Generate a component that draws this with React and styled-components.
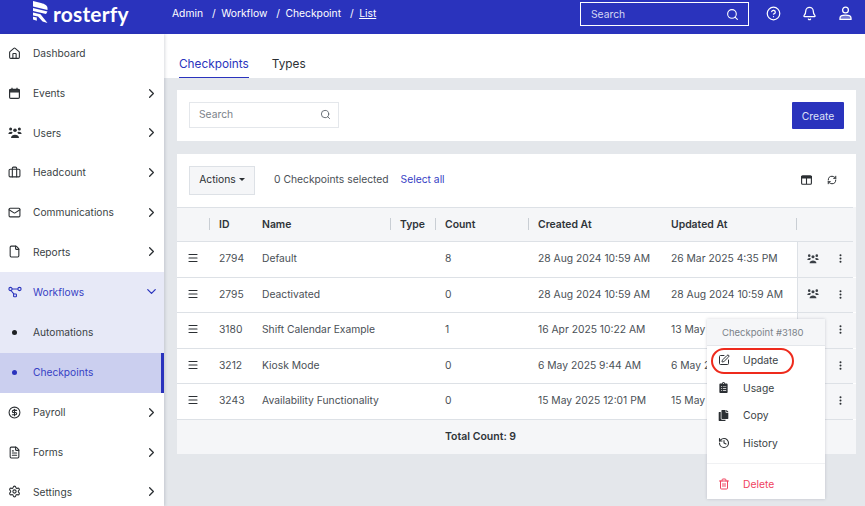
import styled, { createGlobalStyle } from "styled-components";
import {
  Home, Briefcase, Mail, File, CircleDollarSign, FileText, Settings, ChevronRight, ChevronDown,
  Search, CircleHelp, Bell, RefreshCw, Menu, EllipsisVertical, SquarePen, History, Trash2,
} from "lucide-react";
import { FaClipboardList, FaCopy } from "react-icons/fa";

const GlobalStyle = createGlobalStyle`
  html, body { margin: 0; padding: 0; height: 100%; overflow: hidden; }
  body { font-family: Inter, "Liberation Sans", sans-serif; color: #3a3f45; background: #e4e7eb; }
  * { box-sizing: border-box; }
`;

function GroupIcon({ size = 14, color = "currentColor" }) {
  return (
    <svg width={size} height={size} viewBox="0 0 14 13" fill={color}>
      <circle cx="2.6" cy="2.6" r="1.5" />
      <circle cx="11.4" cy="2.6" r="1.5" />
      <circle cx="7" cy="3.8" r="1.8" />
      <path d="M0.4 7.6 C0.4 5.2 4.2 4.6 4.6 6.2 L3.4 7.6 Z" />
      <path d="M13.6 7.6 C13.6 5.2 9.8 4.6 9.4 6.2 L10.6 7.6 Z" />
      <path d="M3 11.6 C3 7.2 11 7.2 11 11.6 Z" />
    </svg>
  );
}

function CalendarIcon() {
  return (
    <svg width="13" height="13" viewBox="0 0 13 13" fill="none" stroke="currentColor" strokeWidth="1.2">
      <rect x="1.6" y="2.4" width="9.8" height="9" rx="1.2" />
      <path d="M1.6 3.2 H11.4 V4.8 H1.6 Z" fill="currentColor" />
      <path d="M4 0.8 V2.6 M9 0.8 V2.6" />
    </svg>
  );
}

function WorkflowIcon() {
  return (
    <svg width="14" height="14" viewBox="0 0 14 14" fill="none" stroke="currentColor" strokeWidth="1.1">
      <circle cx="2.5" cy="4" r="1.6" />
      <circle cx="11.5" cy="4" r="1.6" />
      <rect x="5.6" y="9" width="2.8" height="2.8" rx="0.6" />
      <path d="M4 4 H10 M3 5.5 L6 9.2" />
    </svg>
  );
}

function PersonIcon() {
  return (
    <svg width="15" height="15" viewBox="0 0 15 15" fill="none" stroke="currentColor" strokeWidth="1.3">
      <circle cx="7.5" cy="4" r="2.9" />
      <path d="M2 13.4 V12 C2 10.2 4.4 9.2 7.5 9.2 C10.6 9.2 13 10.2 13 12 V13.4 Z" fill="rgba(255,255,255,0.35)" />
    </svg>
  );
}

function ColumnsIcon() {
  return (
    <svg width="11" height="10" viewBox="0 0 11 10" fill="none" stroke="#2b2f33" strokeWidth="1.1">
      <rect x="0.6" y="0.8" width="9.8" height="8.4" rx="1" />
      <path d="M0.6 1.6 H10.4 V3 H0.6 Z" fill="#2b2f33" />
      <path d="M5.5 2 V9" />
    </svg>
  );
}

const navItems = [
  { label: "Dashboard", icon: <Home size={13} /> },
  { label: "Events", icon: <CalendarIcon />, arrow: true },
  { label: "Users", icon: <GroupIcon size={14} />, arrow: true },
  { label: "Headcount", icon: <Briefcase size={13} />, arrow: true },
  { label: "Communications", icon: <Mail size={13} />, arrow: true },
  { label: "Reports", icon: <File size={13} />, arrow: true },
];

const navBottom = [
  { label: "Payroll", icon: <CircleDollarSign size={13} /> },
  { label: "Forms", icon: <FileText size={13} /> },
  { label: "Settings", icon: <Settings size={13} /> },
];

const rows = [
  { id: 2794, name: "Default", count: 8, created: "28 Aug 2024 10:59 AM", updated: "26 Mar 2025 4:35 PM", h: 36 },
  { id: 2795, name: "Deactivated", count: 0, created: "28 Aug 2024 10:59 AM", updated: "28 Aug 2024 10:59 AM", h: 35 },
  { id: 3180, name: "Shift Calendar Example", count: 1, created: "16 Apr 2025 10:22 AM", updated: "13 May 2025 9:15 AM", h: 36 },
  { id: 3212, name: "Kiosk Mode", count: 0, created: "6 May 2025 9:44 AM", updated: "6 May 2025 9:44 AM", h: 35 },
  { id: 3243, name: "Availability Functionality", count: 0, created: "15 May 2025 12:01 PM", updated: "15 May 2025 12:01 PM", h: 36 },
];

function Logo() {
  return (
    <LogoWrap>
      <svg width="15" height="23" viewBox="0 0 15 23" fill="#fff">
        <path d="M0 0 L8 2 C12 3 14.5 4.6 14.5 7.2 L14.5 9 L0 5.6 Z" />
        <path d="M0 7 L14.5 10.4 L13 13 L0 10 Z" />
        <path d="M0 11.4 L7.5 13.2 L14.5 22 L9.6 20.4 L5 15.4 L0 14.4 Z" />
        <path d="M0 15.8 L3.8 16.6 L3.8 19.8 L0 18.6 Z" />
      </svg>
      <LogoText>rosterfy</LogoText>
    </LogoWrap>
  );
}

export default function App() {
  return (
    <Page>
      <GlobalStyle />
      <TopBar>
        <Logo />
        <Crumbs>
          <span>Admin</span><Slash>/</Slash>
          <span>Workflow</span><Slash>/</Slash>
          <span>Checkpoint</span><Slash>/</Slash>
          <CrumbLink>List</CrumbLink>
        </Crumbs>
        <TopSearch>
          <span>Search</span>
          <Search size={13} color="#fff" />
        </TopSearch>
        <TopIcons>
          <CircleHelp size={15} />
          <Bell size={15} />
          <PersonIcon />
        </TopIcons>
      </TopBar>
      <Body>
        <Sidebar>
          {navItems.map((n) => (
            <NavRow key={n.label}>
              <NavIcon>{n.icon}</NavIcon>
              <NavLabel>{n.label}</NavLabel>
              {n.arrow && <ChevronRight size={15} color="#2b2f33" />}
            </NavRow>
          ))}
          <NavRow $open $blue>
            <NavIcon $blue><WorkflowIcon /></NavIcon>
            <NavLabel>Workflows</NavLabel>
            <ChevronDown size={15} color="#2a33bd" />
          </NavRow>
          <NavRow $open>
            <Dot />
            <NavLabel>Automations</NavLabel>
          </NavRow>
          <NavRow $open $active $blue>
            <Dot $blue />
            <NavLabel>Checkpoints</NavLabel>
          </NavRow>
          {navBottom.map((n) => (
            <NavRow key={n.label}>
              <NavIcon>{n.icon}</NavIcon>
              <NavLabel>{n.label}</NavLabel>
              <ChevronRight size={15} color="#2b2f33" />
            </NavRow>
          ))}
        </Sidebar>
        <Main>
          <Tabs>
            <Tab $active>Checkpoints</Tab>
            <Tab>Types</Tab>
          </Tabs>
          <Content>
            <SearchCard>
              <SearchBox>
                <span>Search</span>
                <Search size={11} color="#5f666d" />
              </SearchBox>
              <CreateButton>Create</CreateButton>
            </SearchCard>
            <TableCard>
              <Toolbar>
                <ActionsButton>Actions<Caret /></ActionsButton>
                <SelectedText>0 Checkpoints selected</SelectedText>
                <SelectAll>Select all</SelectAll>
                <ToolIcons>
                  <ColumnsIcon />
                  <RefreshCw size={10} color="#2b2f33" strokeWidth={2.4} />
                </ToolIcons>
              </Toolbar>
              <HeadRow>
                <HeadCell $sep="right" />
                <HeadCell>ID</HeadCell>
                <HeadCell>Name</HeadCell>
                <HeadCell $sep="left">Type</HeadCell>
                <HeadCell $sep="left">Count</HeadCell>
                <HeadCell $sep="left">Created At</HeadCell>
                <HeadCell>Updated At</HeadCell>
                <HeadCell $sep="left" />
              </HeadRow>
              {rows.map((r) => (
                <Row key={r.id} $h={r.h}>
                  <Cell><Menu size={12} color="#2b2f33" strokeWidth={2.2} /></Cell>
                  <Cell>{r.id}</Cell>
                  <Cell>{r.name}</Cell>
                  <Cell />
                  <Cell>{r.count}</Cell>
                  <Cell>{r.created}</Cell>
                  <Cell>{r.updated}</Cell>
                  <ActionCell>
                    <GroupIcon size={12} color="#3a3f45" />
                    <EllipsisVertical size={11} color="#2b2f33" strokeWidth={2.4} />
                  </ActionCell>
                </Row>
              ))}
              <FootRow>
                <FootText>Total Count: 9</FootText>
              </FootRow>
            </TableCard>
          </Content>
        </Main>
      </Body>
      <Popover>
        <PopHead>Checkpoint #3180</PopHead>
        <PopList>
          <PopItem><PopIcon><SquarePen size={12} /></PopIcon>Update<RedRing /></PopItem>
          <PopItem><PopIcon><FaClipboardList size={11} /></PopIcon>Usage</PopItem>
          <PopItem><PopIcon><FaCopy size={11} /></PopIcon>Copy</PopItem>
          <PopItem><PopIcon><History size={12} strokeWidth={2.2} /></PopIcon>History</PopItem>
        </PopList>
        <PopDelete><PopIcon><Trash2 size={12} /></PopIcon>Delete</PopDelete>
      </Popover>
    </Page>
  );
}

const Page = styled.div`
  position: relative;
  width: 865px;
  height: 506px;
  overflow: hidden;
  display: flex;
  flex-direction: column;
`;

const TopBar = styled.header`
  height: 34px;
  flex: none;
  background: #2a33bd;
  color: #fff;
  display: flex;
  align-items: center;
  padding-left: 33px;
`;

const LogoWrap = styled.div`
  display: flex;
  align-items: center;
  gap: 5px;
  width: 139px;
  margin-top: -9px;
`;

const LogoText = styled.span`
  font-family: Lato, sans-serif;
  font-weight: 700;
  font-size: 21px;
  margin-top: 2px;
  letter-spacing: 0.2px;
`;

const Crumbs = styled.nav`
  font-size: 10.3px;
  display: flex;
  width: 408px;
  margin-top: -8px;
`;

const Slash = styled.span`
  margin: 0 5.4px 0 9px;
`;

const CrumbLink = styled.span`
  text-decoration: underline;
`;

const TopSearch = styled.div`
  width: 169px;
  height: 24px;
  border: 1px solid #fff;
  display: flex;
  align-items: center;
  justify-content: space-between;
  padding: 0 9px 0 10px;
  font-size: 10.3px;
  color: #d5d8f4;
  margin-top: -6px;
`;

const TopIcons = styled.div`
  display: flex;
  gap: 21px;
  margin-left: 17px;
  margin-top: -8px;
`;

const Body = styled.div`
  flex: 1;
  display: flex;
  min-height: 0;
`;

const Sidebar = styled.aside`
  width: 164px;
  flex: none;
  background: #fff;
  box-shadow: 1px 0 3px rgba(40, 50, 70, 0.18);
  z-index: 1;
`;

const NavRow = styled.div`
  height: ${(p) => (p.$open ? "40.3px" : "39.7px")};
  display: flex;
  align-items: center;
  padding: 0 5px 1px 8px;
  font-size: 10.2px;
  color: ${(p) => (p.$blue ? "#3640c4" : "#3a3f45")};
  background: ${(p) => (p.$active ? "#cbcfef" : p.$open ? "#e7e9f7" : "#fff")};
  border-right: ${(p) => (p.$active ? "3px solid #2a33bd" : "none")};
`;

const NavIcon = styled.span`
  width: 25px;
  display: flex;
  color: ${(p) => (p.$blue ? "#2a33bd" : "#2b2f33")};
`;

const NavLabel = styled.span`
  flex: 1;
`;

const Dot = styled.span`
  width: 5px;
  height: 5px;
  border-radius: 50%;
  margin: 0 16px 0 4px;
  flex: none;
  background: ${(p) => (p.$blue ? "#2a33bd" : "#1e2124")};
`;

const Main = styled.main`
  flex: 1;
  min-width: 0;
  display: flex;
  flex-direction: column;
`;

const Tabs = styled.div`
  height: 44px;
  flex: none;
  background: #fff;
  display: flex;
  gap: 23px;
  padding-left: 15px;
`;

const Tab = styled.div`
  font-size: 11.8px;
  padding-top: 23px;
  color: ${(p) => (p.$active ? "#2a33bd" : "#2b2f33")};
  border-bottom: ${(p) => (p.$active ? "1px solid #2a33bd" : "none")};
`;

const Content = styled.div`
  flex: 1;
  padding: 12px 9px 0 13px;
  display: flex;
  flex-direction: column;
  gap: 13px;
`;

const SearchCard = styled.section`
  height: 51px;
  flex: none;
  background: #fff;
  display: flex;
  align-items: flex-start;
  justify-content: space-between;
  padding: 12px 12px 0;
`;

const SearchBox = styled.div`
  width: 150px;
  height: 26px;
  border: 1px solid #e4e7eb;
  display: flex;
  align-items: center;
  justify-content: space-between;
  padding: 0 7px 2px 9px;
  font-size: 10.3px;
  color: #7b8289;
`;

const CreateButton = styled.button`
  width: 52px;
  height: 27px;
  border: none;
  border-radius: 1px;
  background: #2a33bd;
  color: #dfe1f7;
  font: 400 10.3px Inter, sans-serif;
  padding: 0;
`;

const TableCard = styled.section`
  background: #fff;
  flex: none;
`;

const Toolbar = styled.div`
  height: 53px;
  display: flex;
  align-items: center;
  padding: 0 12px 1px;
  font-size: 10.3px;
`;

const ActionsButton = styled.button`
  width: 66px;
  height: 29px;
  background: #f5f6f8;
  border: 1px solid #dde1e6;
  font: 400 10.3px Inter, sans-serif;
  color: #2b2f33;
  padding: 0 0 2px;
  margin-right: 19px;
`;

const Caret = styled.i`
  display: inline-block;
  margin-left: 3px;
  vertical-align: 2px;
  border-top: 3px solid #2b2f33;
  border-left: 3px solid transparent;
  border-right: 3px solid transparent;
`;

const SelectedText = styled.span`
  color: #4a5056;
  margin: 0 12px 2px 0;
`;

const SelectAll = styled.span`
  color: #3640c4;
  margin-bottom: 2px;
`;

const ToolIcons = styled.div`
  margin-left: auto;
  display: flex;
  align-items: center;
  gap: 15px;
  padding-right: 7px;
`;

const columns = "33px 43px 138px 45px 93px 133px 135px 56px";

const HeadRow = styled.div`
  display: grid;
  grid-template-columns: ${columns};
  height: 34.5px;
  background: #f5f6f8;
  box-shadow: 3px 0 0 #f5f6f8;
  border-top: 1px solid #dde1e6;
  border-bottom: 1px solid #dde1e6;
  width: 676px;
`;

const HeadCell = styled.div`
  font-size: 10.4px;
  font-weight: 600;
  color: #2f3439;
  display: flex;
  align-items: center;
  padding-left: 9px;
  position: relative;
  &::before {
    content: "";
    display: ${(p) => (p.$sep ? "block" : "none")};
    position: absolute;
    ${(p) => (p.$sep === "right" ? "right: 0;" : "left: -1px;")}
    top: 10px;
    height: 12px;
    width: 1px;
    background: #c9ced4;
  }
`;

const Row = styled.div`
  display: grid;
  grid-template-columns: ${columns};
  height: ${(p) => p.$h}px;
  border-bottom: 1px solid #dde1e6;
  width: 676px;
`;

const Cell = styled.div`
  font-size: 10.3px;
  color: #4a5056;
  display: flex;
  align-items: center;
  padding: 0 0 2px 9px;
  white-space: nowrap;
  overflow: hidden;
  &:first-child {
    padding-left: 10px;
  }
`;

const ActionCell = styled.div`
  display: flex;
  align-items: center;
  justify-content: space-between;
  background: #f5f6f8;
  box-shadow: 3px 0 0 #f5f6f8;
  border-left: 1px solid #dde1e6;
  padding: 0 7px 1px 9px;
`;

const FootRow = styled.div`
  height: 34.5px;
  background: #f5f6f8;
  display: flex;
  align-items: center;
  padding-left: 268px;
`;

const FootText = styled.span`
  font-size: 10.5px;
  font-weight: 600;
  color: #2f3439;
`;

const Popover = styled.div`
  position: absolute;
  left: 707px;
  top: 319px;
  width: 118px;
  height: 180px;
  background: #fff;
  box-shadow: 0 0 3px rgba(40, 50, 70, 0.2);
  z-index: 2;
`;

const PopHead = styled.div`
  height: 27px;
  background: #f5f6f8;
  border-bottom: 1px solid #e4e7eb;
  font-size: 9.5px;
  color: #7b8289;
  display: flex;
  align-items: center;
  padding-left: 15px;
`;

const PopList = styled.div`
  padding-top: 0.5px;
  border-bottom: 1px solid #f0f1f3;
  height: 118px;
`;

const PopItem = styled.div`
  position: relative;
  height: 27.5px;
  display: flex;
  align-items: center;
  padding-left: 11px;
  font-size: 10.3px;
  color: #3a3f45;
`;

const PopIcon = styled.span`
  width: 25px;
  display: flex;
  color: #2b2f33;
`;

const RedRing = styled.span`
  position: absolute;
  left: 4px;
  top: 1px;
  width: 83px;
  height: 26px;
  border: 2px solid #ee2a1c;
  border-radius: 13px;
`;

const PopDelete = styled(PopItem)`
  color: #f0435e;
  height: 39px;
  ${PopIcon} {
    color: #f0435e;
  }
`;
